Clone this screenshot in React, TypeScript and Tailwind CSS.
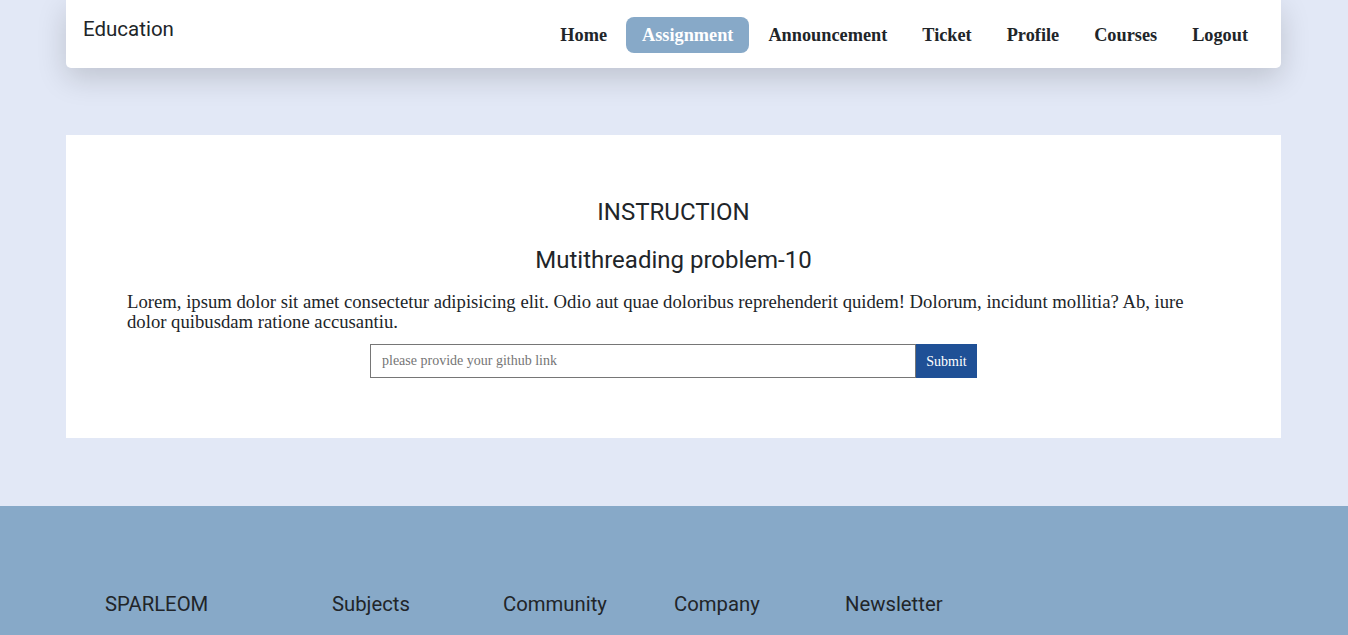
const links = ['Home', 'Assignment', 'Announcement', 'Ticket', 'Profile', 'Courses', 'Logout'];
const footerCols = ['SPARLEOM', 'Subjects', 'Community', 'Company', 'Newsletter'];

export default function App() {
  return (
    <div className="min-h-screen bg-[#e2e8f6] text-[#212529]">
      <div className="pl-[66px] pr-[67px]">
        <nav className="flex items-start justify-between rounded-b-[5px] bg-white pl-[17px] pr-[17px] pt-[17px] pb-[15px] shadow-[0_10px_30px_rgba(0,0,0,0.16)]">
          <span className="font-['Roboto',sans-serif] text-[20.5px] leading-[24px] text-[#212529]">Education</span>
          <ul className="flex gap-[3px]">
            {links.map((l) => (
              <li key={l}>
                <a
                  href="#"
                  className={
                    l === 'Assignment'
                      ? "block rounded-[8px] bg-[#87a9c8] px-4 font-['Liberation_Serif',serif] text-[18.3px] font-bold leading-[36px] text-white"
                      : "block px-4 font-['Liberation_Serif',serif] text-[18.3px] font-bold leading-[36px] text-[#212529]"
                  }
                >
                  {l}
                </a>
              </li>
            ))}
          </ul>
        </nav>

        <section className="mt-[67px] bg-white px-[61px] pt-[63px] pb-[60px]">
          <h2 className="text-center font-['Roboto',sans-serif] text-[24px] leading-[28px] text-[#212529]">INSTRUCTION</h2>
          <h3 className="mt-[20px] text-center font-['Roboto',sans-serif] text-[24px] leading-[28px] text-[#212529]">
            Mutithreading problem-10
          </h3>
          <p className="mt-[18px] mr-[5px] font-['Liberation_Serif',serif] text-[18.7px] leading-[20px] text-[#212529]">
            Lorem, ipsum dolor sit amet consectetur adipisicing elit. Odio aut quae doloribus reprehenderit quidem! Dolorum, incidunt mollitia? Ab, iure dolor quibusdam ratione accusantiu.
          </p>
          <form className="mt-[12px] flex justify-center" onSubmit={(e) => e.preventDefault()}>
            <input
              type="text"
              placeholder="please provide your github link"
              className="h-[34px] w-[546px] border border-[#767676] px-[11px] font-['Liberation_Serif',serif] text-[14px] text-[#212529] outline-none placeholder:text-[#757575]"
            />
            <button className="h-[34px] w-[61px] bg-[#1f5096] font-['Liberation_Serif',serif] text-[14px] text-white">Submit</button>
          </form>
        </section>
      </div>

      <footer className="mt-[68px] bg-[#87a9c8] pl-[105px] pt-[86px] pb-24">
        <div className="grid grid-cols-[227px_171px_171px_171px_171px]">
          {footerCols.map((c) => (
            <h4 key={c} className="font-['Roboto',sans-serif] text-[20.3px] leading-[24px] text-[#212529]">
              {c}
            </h4>
          ))}
        </div>
      </footer>
    </div>
  );
}
